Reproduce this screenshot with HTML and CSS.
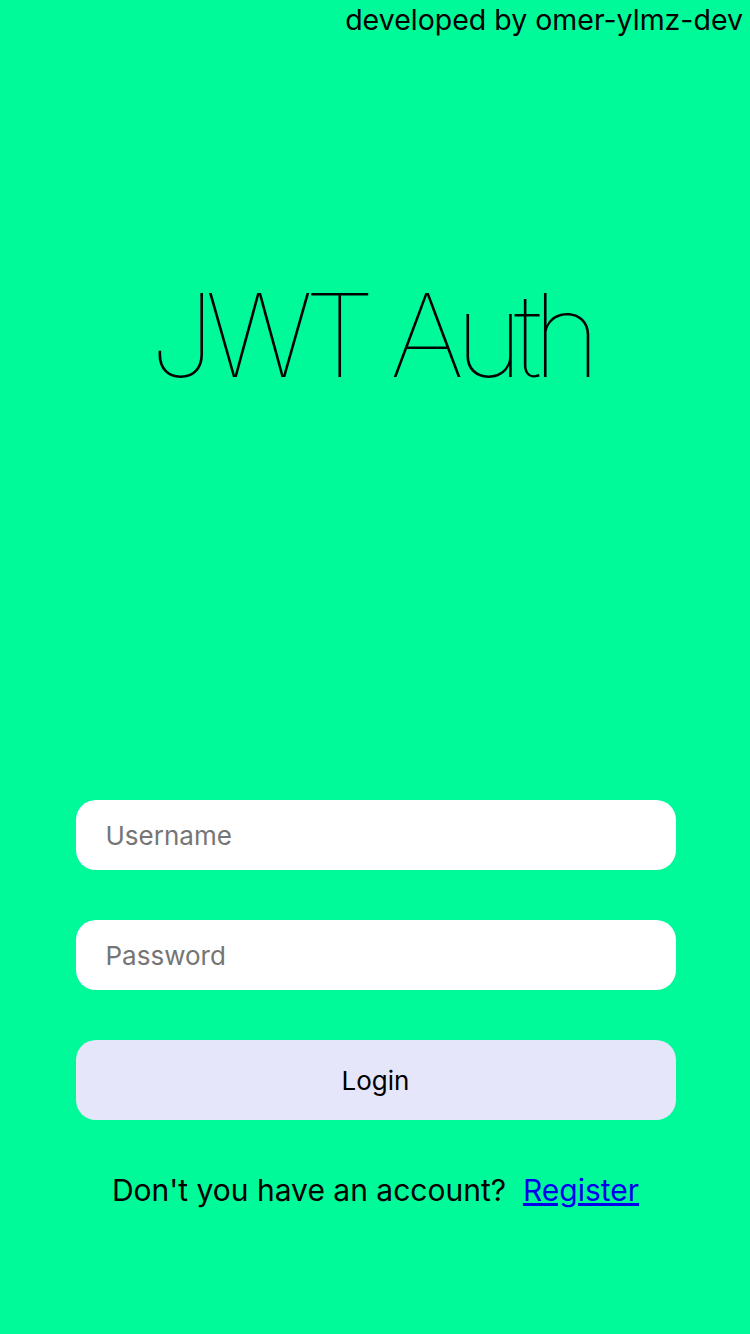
FILE: index.html
```html
<!DOCTYPE html>
<html lang="en">
<head>
<meta charset="utf-8">
<title>JWT Auth</title>
<link rel="stylesheet" href="styles.css">
</head>
<body>
<div class="page">
  <header class="credit">developed by omer-ylmz-dev</header>
  <h1 class="title">JWT Auth</h1>
  <form class="form">
    <input class="field" type="text" placeholder="Username">
    <input class="field" type="password" placeholder="Password">
    <button class="btn" type="button">Login</button>
    <p class="register">Don't you have an account?&nbsp; <a href="#">Register</a></p>
  </form>
</div>
</body>
</html>
```
FILE: styles.css
```css
html, body {
  margin: 0;
  padding: 0;
}
body {
  background: #00fa9a;
  font-family: Inter, "Liberation Sans", sans-serif;
  color: #000;
}
.page {
  width: 750px;
  height: 1334px;
  display: flex;
  flex-direction: column;
}
.credit {
  text-align: right;
  font-size: 28.5px;
  line-height: 40px;
  padding-right: 7px;
  font-weight: 400;
}
.title {
  margin: 220px 0 0;
  text-align: center;
  font-size: 116px;
  font-weight: 100;
  line-height: 150px;
  letter-spacing: -9px;
  text-indent: -9px;
}
.form {
  margin: 390px 0 0 1px;
  display: flex;
  flex-direction: column;
  align-items: center;
  gap: 50px;
}
.field {
  box-sizing: border-box;
  width: 600px;
  height: 70px;
  border: none;
  border-radius: 20px;
  background: #fff;
  padding: 0 30px;
  font-family: inherit;
  font-size: 26px;
  outline: none;
}
.field::placeholder {
  color: #757575;
}
.btn {
  width: 600px;
  height: 80px;
  border: none;
  border-radius: 20px;
  background: #e6e6fa;
  font-family: inherit;
  font-size: 26px;
  color: #000;
}
.register {
  margin: 0;
  font-size: 30px;
  line-height: 40px;
}
.register a {
  color: #0000ee;
  text-decoration: underline;
}
```
